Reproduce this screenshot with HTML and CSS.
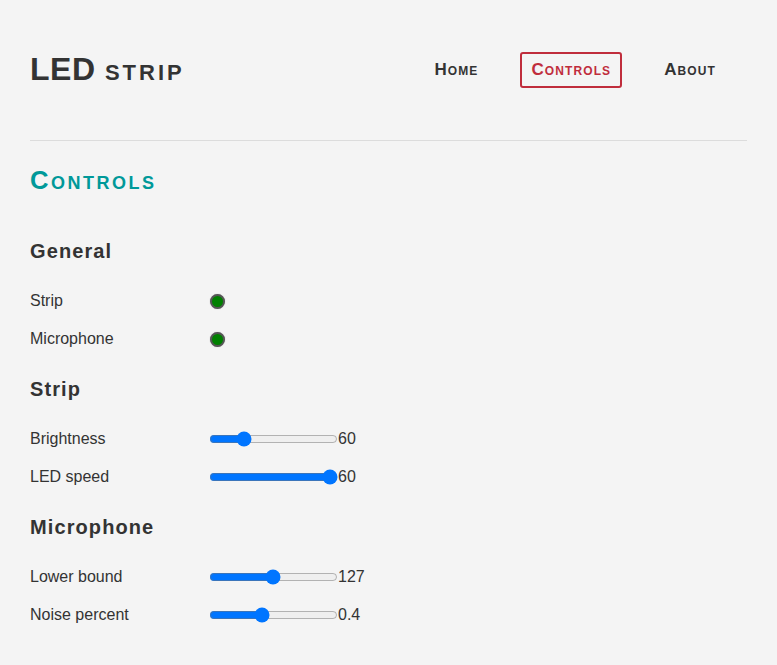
FILE: index.html
```html
<!DOCTYPE html>
<html>
<head>
<meta charset="utf-8">
<title>LED strip</title>
<link rel="stylesheet" href="styles.css">
</head>
<body>
<div class="page">
  <header class="header">
    <h1 class="brand">LED <span class="brand-small">strip</span></h1>
    <nav class="nav">
      <a class="nav-link" href="#">Home</a>
      <a class="nav-link active" href="#">Controls</a>
      <a class="nav-link" href="#">About</a>
    </nav>
  </header>
  <hr class="rule">
  <h2 class="page-title">Controls</h2>

  <section class="group">
    <h3 class="group-title">General</h3>
    <div class="row"><span class="label">Strip</span><span class="led"></span></div>
    <div class="row"><span class="label">Microphone</span><span class="led"></span></div>
  </section>

  <section class="group">
    <h3 class="group-title">Strip</h3>
    <div class="row"><span class="label">Brightness</span><input class="slider" type="range" min="0" max="255" value="60"><span class="value">60</span></div>
    <div class="row"><span class="label">LED speed</span><input class="slider" type="range" min="0" max="60" value="60"><span class="value">60</span></div>
  </section>

  <section class="group">
    <h3 class="group-title">Microphone</h3>
    <div class="row"><span class="label">Lower bound</span><input class="slider" type="range" min="0" max="255" value="127"><span class="value">127</span></div>
    <div class="row"><span class="label">Noise percent</span><input class="slider" type="range" min="0" max="1" step="0.1" value="0.4"><span class="value">0.4</span></div>
  </section>
</div>
</body>
</html>
```
FILE: styles.css
```css
html, body {
  margin: 0;
  padding: 0;
  background: #f4f4f4;
}
body {
  font-family: "Liberation Sans", Arial, sans-serif;
  color: #333;
  font-size: 16px;
}
.page {
  padding: 0 30px;
}
.header {
  display: flex;
  align-items: center;
  justify-content: space-between;
  padding-top: 50px;
  height: 40px;
  padding-bottom: 50px;
}
.brand {
  margin: 0 0 2px;
  font-size: 32px;
  font-weight: bold;
  font-variant: small-caps;
  line-height: 40px;
  letter-spacing: 0.5px;
}
.brand-small {
  letter-spacing: 3px;
}
.nav {
  display: flex;
  align-items: center;
  gap: 31px;
  margin-right: 20px;
}
.nav-link {
  display: block;
  font-weight: bold;
  font-variant: small-caps;
  font-size: 17px;
  letter-spacing: 1.1px;
  color: #333;
  text-decoration: none;
  padding: 7px 9px;
  line-height: 18px;
  border: 2px solid transparent;
  border-radius: 3px;
}
.nav-link.active {
  color: #c02d3c;
  border-color: #c02d3c;
}
.rule {
  margin: 0;
  border: 0;
  border-top: 1px solid #dcdcdc;
}
.page-title {
  margin: 24px 0 25px;
  font-size: 25.6px;
  line-height: 30px;
  letter-spacing: 2.5px;
  font-weight: bold;
  font-variant: small-caps;
  color: #009999;
}
.group-title {
  margin: 0;
  padding: 19px 0;
  font-size: 20px;
  line-height: 24px;
  letter-spacing: 1.1px;
  font-weight: bold;
}
.row {
  display: flex;
  align-items: center;
  height: 38px;
}
.label {
  width: 177px;
  flex: none;
}
.led {
  width: 11px;
  height: 11px;
  margin-left: 3px;
  border-radius: 50%;
  background: #008000;
  border: 2px solid #555;
  box-shadow: 0 0 1px #999;
}
.slider {
  width: 129px;
  margin: 2px 0 2px 2px;
}
```
